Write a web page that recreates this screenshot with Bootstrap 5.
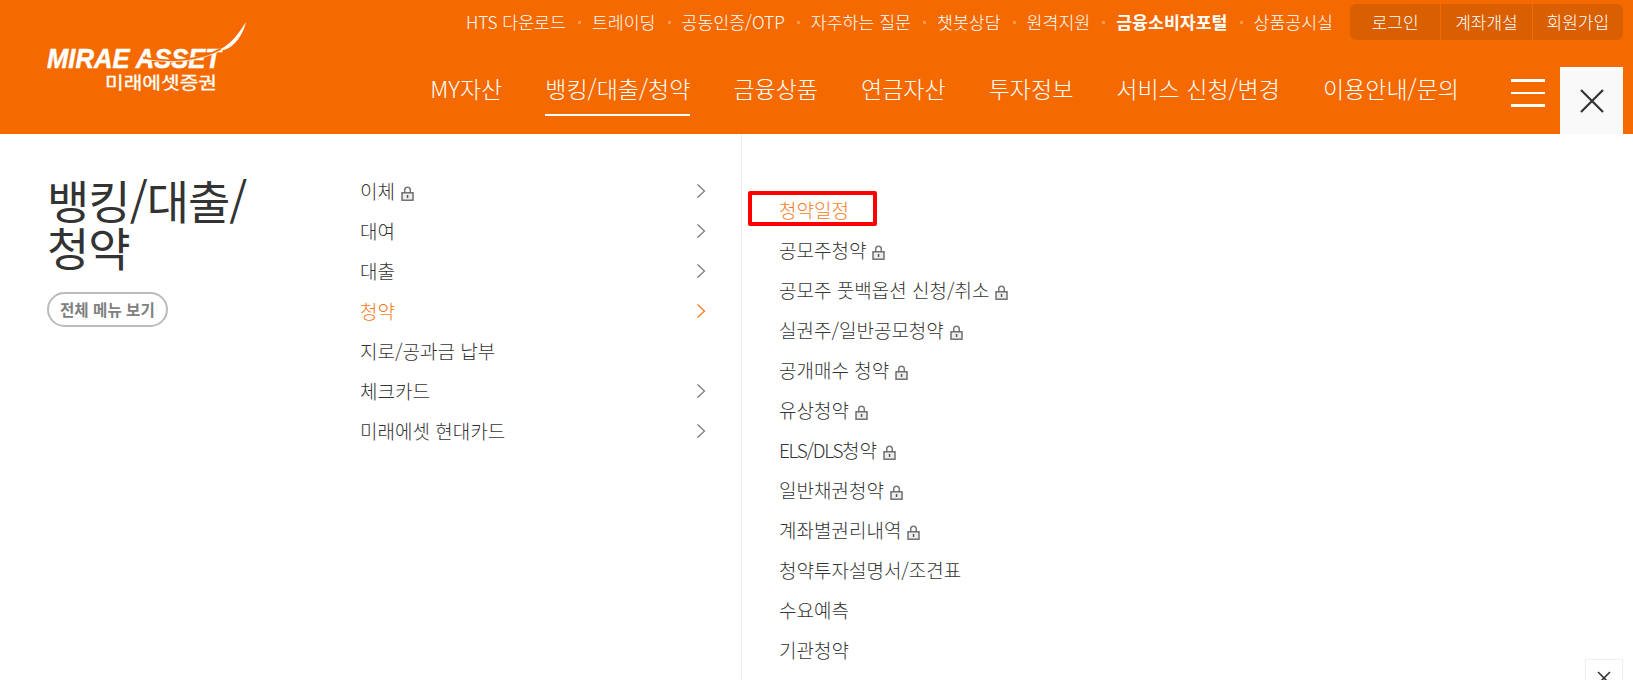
<!DOCTYPE html>
<html lang="ko">

<head>
  <meta charset="UTF-8">
  <meta name="viewport" content="width=device-width, initial-scale=1.0">
  <title>미래에셋증권 - 뱅킹/대출/청약</title>
  <link href="https://cdn.jsdelivr.net/npm/bootstrap@5.3.0/dist/css/bootstrap.min.css" rel="stylesheet">
  <style>
    html, body { height: 680px; overflow: hidden; }
    body { font-family: "Noto Sans CJK KR", "Noto Sans", sans-serif; font-weight: 300; color: #333; background: #fff; position: relative; }
    a { color: inherit; text-decoration: none; }

    /* 상단 헤더 */
    .top-head { height: 134px; background: #f46a00; color: #fff; }
    .logo-box { width: 400px; padding: 22px 0 0 45px; flex: none; }
    .head-right { min-width: 0; padding-right: 10px; }
    .util-row { height: 46px; padding-top: 4px; }
    .util-link { font-size: 17.3px; line-height: 36px; white-space: nowrap; }
    .util-link + .util-link { margin-left: 13px; padding-left: 13px; position: relative; }
    .util-link + .util-link::before { content: ""; position: absolute; left: -1px; top: 17px; width: 3px; height: 3px; background: #fa9a50; }
    .auth-group { width: 273px; height: 36px; margin-left: 17px; background: #d95f00; border-radius: 6px; overflow: hidden; }
    .auth-btn { flex: 1; font-size: 17px; line-height: 36px; text-align: center; color: #fff; }
    .auth-btn + .auth-btn { border-left: 1px solid #f46a00; }
    .gnb-row { height: 88px; }
    .gnb-link { display: block; font-size: 23px; line-height: 30px; padding: 27px 0 11px; margin-right: 43px; white-space: nowrap; border-bottom: 2px solid transparent; }
    .gnb-link.on { border-bottom-color: #fff; }
    .ham-btn { width: 34px; margin: 33px 15px 0 9px; }
    .ham-btn span { display: block; height: 2.5px; background: #fff; margin-bottom: 10px; }
    .ham-btn span:last-child { margin-bottom: 0; }
    .close-btn { width: 63px; height: 67px; background: #f9f9f9; }

    /* 메뉴 영역 */
    .menu-wrap { height: 546px; }
    .title-col { width: 360px; padding: 42px 0 0 47px; flex: none; }
    .menu-title { font-size: 46px; line-height: 47px; font-weight: 400; color: #333; width: 240px; letter-spacing: -1px; margin-bottom: 22px; }
    .all-btn { display: inline-block; height: 35px; line-height: 31px; padding: 0 11px; font-size: 15.6px; font-weight: 700; color: #808080; background: #fff; border: 2px solid #bbb; border-radius: 18px; }
    .depth2 { width: 382px; padding: 37px 35px 0 0; border-right: 1px solid #eee; flex: none; }
    .depth3 { padding: 56px 0 0 37px; position: relative; }
    .menu-item { height: 40px; font-size: 19px; line-height: 40px; white-space: nowrap; }
    .menu-item.on { color: #f8791a; }
    .latin-text { letter-spacing: -1.3px; }
    .chev-ico { width: 10px; height: 16px; color: #777; }
    .menu-item.on .chev-ico { color: #f8791a; }
    .lock-ico { width: 13px; height: 15px; margin-left: 6px; vertical-align: -2px; }
    .red-box { position: absolute; left: 6px; top: 57px; width: 129px; height: 35px; border: 4px solid #f00; border-radius: 2px; }
    .top-btn { position: absolute; right: 10px; top: 659px; width: 38px; height: 38px; background: #fff; border: 1px solid #eee; }
  </style>
</head>

<body>
  <svg width="0" height="0" class="d-block position-absolute">
    <symbol id="lock" viewBox="0 0 13 15">
      <path d="M3.7 7V4a2.8 2.8 0 0 1 5.6 0v3" fill="none" stroke="#777" stroke-width="1.5"/>
      <rect x="1" y="6.8" width="11" height="7.4" fill="#eee" stroke="#666" stroke-width="1.4"/>
      <rect x="5.8" y="9" width="1.5" height="3" fill="#555"/>
    </symbol>
    <symbol id="chev" viewBox="0 0 10 16">
      <path d="M1.5 1.5 8.5 8l-7 6.5" fill="none" stroke="currentColor" stroke-width="1.2"/>
    </symbol>
  </svg>

  <!-- 헤더 -->
  <header class="top-head d-flex">
    <div class="logo-box">
      <svg width="210" height="80" viewBox="0 0 210 80">
        <text x="2" y="46" font-family="Liberation Sans" font-size="28" font-weight="700" font-style="italic" fill="#fff" stroke="#fff" stroke-width=".5" textLength="174" lengthAdjust="spacingAndGlyphs">MIRAE ASSET</text>
        <path d="M98 36C125 41 155 39 176 27" fill="none" stroke="#f46a00" stroke-width="2.4"/>
        <path d="M98 37C125 42 155 40 176 28" fill="none" stroke="#fff" stroke-width=".8"/>
        <path d="M176 27C187 21 194 11 201 0 198 12 191 24 179 28Z" fill="#fff"/>
        <text x="60" y="67" font-family="Noto Sans CJK KR" font-size="17" font-weight="400" fill="#fff" stroke="#fff" stroke-width=".3" textLength="112" lengthAdjust="spacingAndGlyphs">미래에셋증권</text>
      </svg>
    </div>
    <div class="head-right flex-grow-1 d-flex flex-column">
      <div class="util-row d-flex justify-content-end">
        <a href="#" class="util-link">HTS 다운로드</a>
        <a href="#" class="util-link">트레이딩</a>
        <a href="#" class="util-link">공동인증/OTP</a>
        <a href="#" class="util-link">자주하는 질문</a>
        <a href="#" class="util-link">챗봇상담</a>
        <a href="#" class="util-link">원격지원</a>
        <a href="#" class="util-link fw-bold">금융소비자포털</a>
        <a href="#" class="util-link">상품공시실</a>
        <div class="auth-group d-flex">
          <a href="#" class="auth-btn">로그인</a>
          <a href="#" class="auth-btn">계좌개설</a>
          <a href="#" class="auth-btn">회원가입</a>
        </div>
      </div>
      <div class="gnb-row d-flex justify-content-end align-items-start">
        <nav class="d-flex">
          <a href="#" class="gnb-link">MY자산</a>
          <a href="#" class="gnb-link on">뱅킹/대출/청약</a>
          <a href="#" class="gnb-link">금융상품</a>
          <a href="#" class="gnb-link">연금자산</a>
          <a href="#" class="gnb-link">투자정보</a>
          <a href="#" class="gnb-link">서비스 신청/변경</a>
          <a href="#" class="gnb-link">이용안내/문의</a>
        </nav>
        <div class="ham-btn"><span></span><span></span><span></span></div>
        <a href="#" class="close-btn d-flex align-items-center justify-content-center mt-auto">
          <svg width="24" height="24" viewBox="0 0 24 24"><path d="M1 1l22 22M23 1 1 23" stroke="#333" stroke-width="2.2" fill="none"/></svg>
        </a>
      </div>
    </div>
  </header>

  <!-- 메뉴 -->
  <main class="menu-wrap d-flex">
    <div class="title-col">
      <h2 class="menu-title">뱅킹/대출/청약</h2>
      <a href="#" class="all-btn">전체 메뉴 보기</a>
    </div>
    <ul class="depth2 list-unstyled mb-0">
      <li class="menu-item d-flex justify-content-between align-items-center"><span>이체<svg class="lock-ico"><use href="#lock"/></svg></span><svg class="chev-ico"><use href="#chev"/></svg></li>
      <li class="menu-item d-flex justify-content-between align-items-center"><span>대여</span><svg class="chev-ico"><use href="#chev"/></svg></li>
      <li class="menu-item d-flex justify-content-between align-items-center"><span>대출</span><svg class="chev-ico"><use href="#chev"/></svg></li>
      <li class="menu-item on d-flex justify-content-between align-items-center"><span>청약</span><svg class="chev-ico"><use href="#chev"/></svg></li>
      <li class="menu-item"><span>지로/공과금 납부</span></li>
      <li class="menu-item d-flex justify-content-between align-items-center"><span>체크카드</span><svg class="chev-ico"><use href="#chev"/></svg></li>
      <li class="menu-item d-flex justify-content-between align-items-center"><span>미래에셋 현대카드</span><svg class="chev-ico"><use href="#chev"/></svg></li>
    </ul>
    <ul class="depth3 list-unstyled mb-0 flex-grow-1">
      <li class="menu-item on">청약일정</li>
      <li class="menu-item">공모주청약<svg class="lock-ico"><use href="#lock"/></svg></li>
      <li class="menu-item">공모주 풋백옵션 신청/취소<svg class="lock-ico"><use href="#lock"/></svg></li>
      <li class="menu-item">실권주/일반공모청약<svg class="lock-ico"><use href="#lock"/></svg></li>
      <li class="menu-item">공개매수 청약<svg class="lock-ico"><use href="#lock"/></svg></li>
      <li class="menu-item">유상청약<svg class="lock-ico"><use href="#lock"/></svg></li>
      <li class="menu-item"><span class="latin-text">ELS/DLS</span>청약<svg class="lock-ico"><use href="#lock"/></svg></li>
      <li class="menu-item">일반채권청약<svg class="lock-ico"><use href="#lock"/></svg></li>
      <li class="menu-item">계좌별권리내역<svg class="lock-ico"><use href="#lock"/></svg></li>
      <li class="menu-item">청약투자설명서/조견표</li>
      <li class="menu-item">수요예측</li>
      <li class="menu-item">기관청약</li>
      <li class="red-box"></li>
    </ul>
  </main>

  <a href="#" class="top-btn d-flex align-items-center justify-content-center">
    <svg width="14" height="14" viewBox="0 0 14 14"><path d="M1 1l12 12M13 1 1 13" stroke="#333" stroke-width="1.6" fill="none"/></svg>
  </a>

  <script src="https://cdn.jsdelivr.net/npm/bootstrap@5.3.0/dist/js/bootstrap.bundle.min.js"></script>
</body>

</html>
